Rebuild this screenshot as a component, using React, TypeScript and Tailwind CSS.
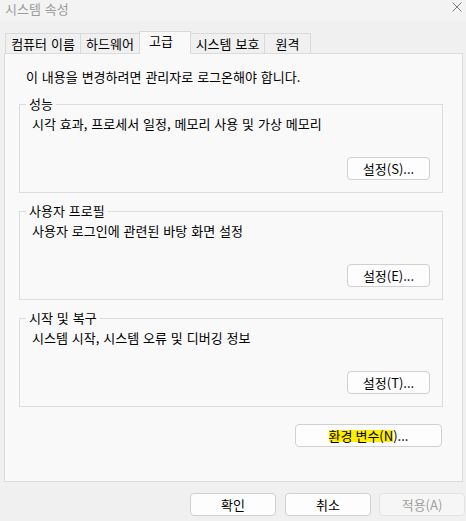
import type { ReactNode } from "react";

const font = "font-['Noto_Sans_CJK_KR','Noto_Sans',sans-serif] [word-spacing:1px]";

const btnClass =
  "flex h-[23px] items-center justify-center rounded-[4px] border border-[#d0d0d0] bg-[#fdfdfd] text-[13px] leading-[16px] text-black";

function Group({ title, desc, action }: { title: string; desc: string; action: string }) {
  return (
    <fieldset className="border border-[#dcdcdc] p-0">
      <legend className="ml-[6px] px-[3px] text-[13px] leading-[16px] text-black">{title}</legend>
      <div className="flex flex-col px-[12px] pb-[12px] pt-[4px]">
        <p className="h-[16px] text-[13px] leading-[16px] text-black">{desc}</p>
        <div className="mt-[25px] flex justify-end">
          <button type="button" className={`${btnClass} w-[83px]`}>
            {action}
          </button>
        </div>
      </div>
    </fieldset>
  );
}

function Tab({ children, className }: { children: ReactNode; className: string }) {
  return (
    <div
      className={`mt-[2px] flex h-[20px] items-center justify-center border-t border-[#d9d9d9] bg-[#f0f0f0] text-[13px] leading-[16px] text-black ${className}`}
    >
      {children}
    </div>
  );
}

export default function App() {
  return (
    <div className={`h-[521px] w-[466px] overflow-hidden bg-[#f0f0f0] ${font}`}>
      {/* title bar */}
      <div className="flex h-[22px] items-start justify-between bg-[#f3f3f3] pl-[5px] pr-[4px]">
        <span className="text-[13px] leading-[17px] text-[#9c9c9c]">시스템 속성</span>
        <svg width="10" height="10" viewBox="0 0 10 10" className="mt-[2px]">
          <path d="M0.5 0.5 9.5 9.5 M9.5 0.5 0.5 9.5" stroke="#7c7c7c" strokeWidth="1" fill="none" />
        </svg>
      </div>

      {/* tabs */}
      <div className="relative z-10 -mb-px mt-[9px] flex h-[23px] items-start pl-[5px]">
        <Tab className="w-[75px] border-l">컴퓨터 이름</Tab>
        <Tab className="w-[59px] border-l">하드웨어</Tab>
        <div className="flex h-[23px] w-[52px] items-start justify-center border-x border-t border-[#d9d9d9] bg-[#f9f9f9] pr-[8px] pt-[1px] text-[13px] leading-[16px] text-black">
          고급
        </div>
        <Tab className="w-[73px]">시스템 보호</Tab>
        <Tab className="w-[47px] border-x">원격</Tab>
      </div>

      {/* panel */}
      <div className="ml-[4px] mr-[3px] flex flex-col border border-[#dcdcdc] bg-[#f9f9f9] pb-[34px] pl-[14px] pr-[19px] pt-[15px]">
        <p className="pl-[7px] text-[13px] leading-[16px] text-black">
          이 내용을 변경하려면 관리자로 로그온해야 합니다.
        </p>
        <div className="mt-[11px] flex flex-col gap-[10px]">
          <Group title="성능" desc="시각 효과, 프로세서 일정, 메모리 사용 및 가상 메모리" action="설정(S)..." />
          <Group title="사용자 프로필" desc="사용자 로그인에 관련된 바탕 화면 설정" action="설정(E)..." />
          <Group title="시작 및 복구" desc="시스템 시작, 시스템 오류 및 디버깅 정보" action="설정(T)..." />
        </div>
        <div className="mt-[17px] flex justify-end pr-[1px]">
          <button type="button" className={`${btnClass} w-[147px]`}>
            <span className="inline-block h-[12px] bg-[#ffee00] leading-[12px]">환경 변수(N</span>
            <span>)...</span>
          </button>
        </div>
      </div>

      {/* footer buttons */}
      <div className="mt-[11px] flex justify-end pr-[1px]">
        <button type="button" className={`${btnClass} w-[86px]`}>
          확인
        </button>
        <button type="button" className={`${btnClass} ml-[9px] w-[86px]`}>
          취소
        </button>
        <button
          type="button"
          disabled
          className="ml-[8px] flex h-[23px] w-[86px] items-center justify-center rounded-[4px] border border-[#e3e3e3] bg-[#f6f6f6] text-[13px] leading-[16px] text-[#a0a0a0]"
        >
          적용(A)
        </button>
      </div>
    </div>
  );
}
